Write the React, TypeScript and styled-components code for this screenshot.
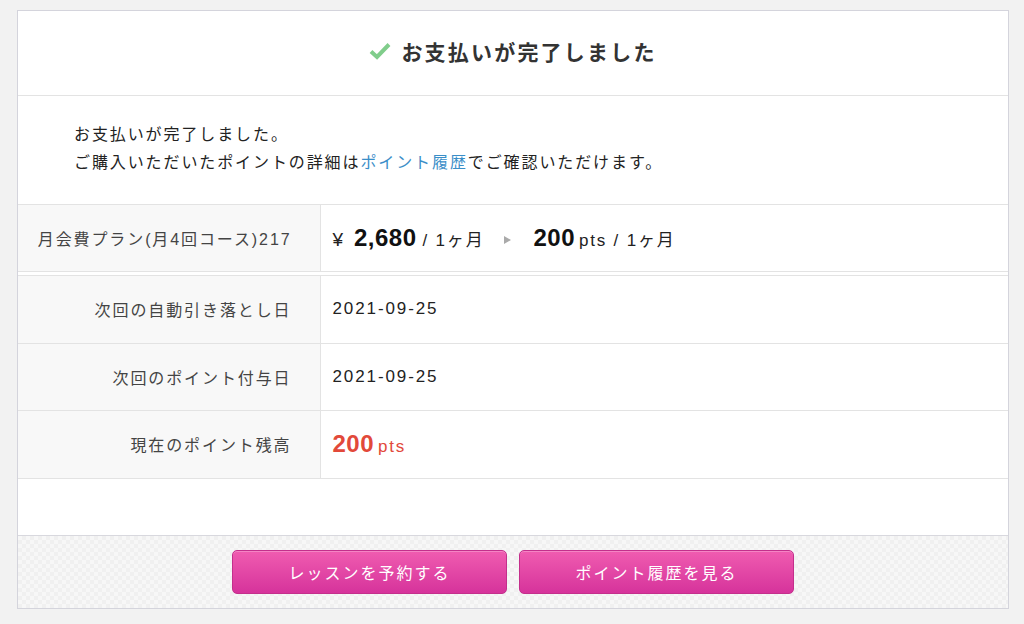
import React from "react";
import styled, { createGlobalStyle } from "styled-components";

const GlobalStyle = createGlobalStyle`
  html, body {
    margin: 0;
    padding: 0;
    background: #f2f2f2;
  }
  body {
    font-family: "Liberation Sans", "Noto Sans CJK JP", sans-serif;
    color: #333;
  }
`;

const Page = styled.div`
  padding: 10px 15px 16px 17px;
`;

const Card = styled.div`
  background: #fff;
  border: 1px solid #d4d4dc;
`;

const Header = styled.div`
  height: 85px;
  padding-bottom: 4px;
  box-sizing: border-box;
  display: flex;
  align-items: center;
  justify-content: center;
  gap: 10px;
  border-bottom: 1px solid #e3e3e3;
`;

const Title = styled.h1`
  margin: 0;
  font-size: 21px;
  font-weight: 700;
  letter-spacing: 2.2px;
  color: #333;
`;

const Message = styled.div`
  padding: 25px 56px 27px;
  font-size: 16px;
  letter-spacing: 1.9px;
  line-height: 28px;
  color: #222;
  border-bottom: 1px solid #e3e3e3;
`;

const Link = styled.a`
  color: #3a8ec8;
  text-decoration: none;
`;

const Table = styled.table<{ $gap?: boolean }>`
  width: 100%;
  border-collapse: collapse;
  margin-top: ${(p) => (p.$gap ? "3px" : "0")};
  border-top: ${(p) => (p.$gap ? "1px solid #e3e3e3" : "none")};
`;

const Row = styled.tr`
  border-bottom: 1px solid #e3e3e3;
`;

const Label = styled.th<{ $h: number }>`
  width: 302px;
  height: ${(p) => p.$h}px;
  padding: 0 28px 0 10px;
  box-sizing: border-box;
  text-align: right;
  font-weight: 400;
  font-size: 16px;
  letter-spacing: 1.9px;
  color: #444;
  background: #f8f8f8;
  border-right: 1px solid #e3e3e3;
  vertical-align: middle;
`;

const Value = styled.td`
  padding: 0 12px;
  font-size: 17px;
  letter-spacing: 1.9px;
  color: #222;
  vertical-align: middle;
`;

const Yen = styled.span`
  font-size: 19px;
  margin-right: 9px;
`;

const Big = styled.span<{ $red?: boolean }>`
  font-size: 24px;
  font-weight: 700;
  letter-spacing: 0.5px;
  color: ${(p) => (p.$red ? "#e2493a" : "#111")};
`;

const Small = styled.span<{ $red?: boolean; $lead?: number }>`
  font-size: 17px;
  letter-spacing: 1.8px;
  margin-left: ${(p) => p.$lead ?? 4}px;
  color: ${(p) => (p.$red ? "#e2493a" : "#222")};
`;

const Arrow = styled.span`
  display: inline-block;
  width: 0;
  height: 0;
  border-top: 4px solid transparent;
  border-bottom: 4px solid transparent;
  border-left: 7px solid #aaa;
  margin: 0 22px 3px 20px;
  vertical-align: middle;
`;

const Spacer = styled.div`
  height: 56px;
  border-bottom: 1px solid #d8d8de;
`;

const Footer = styled.div`
  height: 72px;
  display: flex;
  justify-content: center;
  align-items: flex-start;
  padding-top: 14px;
  box-sizing: border-box;
  gap: 12px;
  background-color: #f7f7f7;
  background-image: linear-gradient(45deg, #f0f0f0 25%, transparent 25%, transparent 75%, #f0f0f0 75%),
    linear-gradient(45deg, #f0f0f0 25%, transparent 25%, transparent 75%, #f0f0f0 75%);
  background-size: 8px 8px;
  background-position: 0 0, 4px 4px;
`;

const Button = styled.button`
  width: 275px;
  height: 44px;
  border: 1px solid #c42f8c;
  border-radius: 5px;
  background: linear-gradient(#f05cb0, #d6339b);
  box-shadow: inset 0 1px 0 rgba(255, 255, 255, 0.25);
  color: #fff;
  font-family: "Liberation Sans", "Noto Sans CJK JP", sans-serif;
  font-size: 16px;
  letter-spacing: 2px;
  cursor: pointer;
`;

const Check = () => (
  <svg width="22" height="18" viewBox="0 0 22 18">
    <path d="M2 9.5 L8 15 L20 2.5" fill="none" stroke="#80cd8b" strokeWidth="4" />
  </svg>
);

export default function App() {
  return (
    <Page>
      <GlobalStyle />
      <Card>
        <Header>
          <Check />
          <Title>お支払いが完了しました</Title>
        </Header>
        <Message>
          お支払いが完了しました。
          <br />
          ご購入いただいたポイントの詳細は<Link href="#">ポイント履歴</Link>でご確認いただけます。
        </Message>
        <Table>
          <tbody>
            <Row>
              <Label $h={66}>月会費プラン(月4回コース)217</Label>
              <Value>
                <Yen>¥</Yen>
                <Big>2,680</Big>
                <Small $lead={6}>/ 1ヶ月</Small>
                <Arrow />
                <Big>200</Big>
                <Small>pts / 1ヶ月</Small>
              </Value>
            </Row>
          </tbody>
        </Table>
        <Table $gap>
          <tbody>
            <Row>
              <Label $h={68}>次回の自動引き落とし日</Label>
              <Value>2021-09-25</Value>
            </Row>
            <Row>
              <Label $h={67}>次回のポイント付与日</Label>
              <Value>2021-09-25</Value>
            </Row>
            <Row>
              <Label $h={68}>現在のポイント残高</Label>
              <Value>
                <Big $red>200</Big>
                <Small $red>pts</Small>
              </Value>
            </Row>
          </tbody>
        </Table>
        <Spacer />
        <Footer>
          <Button>レッスンを予約する</Button>
          <Button>ポイント履歴を見る</Button>
        </Footer>
      </Card>
    </Page>
  );
}
